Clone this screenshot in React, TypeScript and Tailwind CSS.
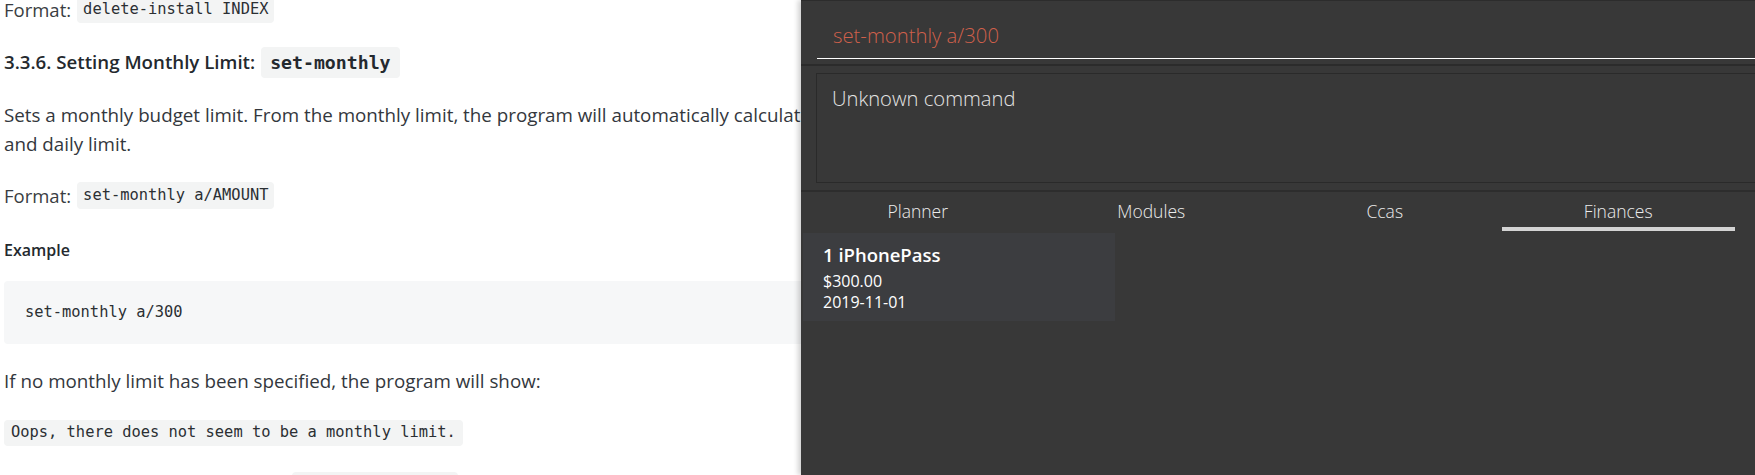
import React from "react";

const body = "font-['Open_Sans','Noto_Sans',sans-serif]";
const mono = "font-['DejaVu_Sans_Mono','Liberation_Mono',monospace]";
const seg = "font-['Open_Sans','Noto_Sans',sans-serif]";

function Code({ children, cls = "" }: { children: React.ReactNode; cls?: string }) {
  return (
    <span
      className={`${mono} inline-flex items-center bg-[#f3f4f4] rounded-[4px] px-[6px] text-[15.4px] text-[#2b2f33] ${cls}`}
    >
      {children}
    </span>
  );
}

export default function App() {
  return (
    <div className="flex w-[1755px] h-[475px] overflow-hidden bg-white">
      {/* Left: documentation page */}
      <div className={`w-[801px] shrink-0 overflow-hidden ${body} text-[#2c3036]`}>
        <div className="w-[1200px] pl-[4px] flex flex-col items-start">
          {/* Format: delete-install INDEX */}
          <div className="mt-[-4px] h-[27px] flex items-center gap-[6px] text-[18.5px]">
            <span className="text-[#3a3d42]">Format:</span>
            <Code cls="h-[27px]">delete-install INDEX</Code>
          </div>

          {/* Heading */}
          <div className="mt-[24px] h-[31px] flex items-center gap-[6px]">
            <span className="text-[18.7px] font-semibold text-[#24292e]">3.3.6. Setting Monthly Limit:</span>
            <span
              className={`${mono} inline-flex items-center h-[31px] bg-[#f3f4f4] rounded-[4px] px-[9px] text-[18.2px] font-bold text-[#24292e]`}
            >
              set-monthly
            </span>
          </div>

          {/* Paragraph */}
          <div className="mt-[23px] text-[18.8px] leading-[29px] whitespace-nowrap text-[#33373d]">
            Sets a monthly budget limit. From the monthly limit, the program will automatically calculate the weekly limit
            <br />
            and daily limit.
          </div>

          {/* Format: set-monthly a/AMOUNT */}
          <div className="mt-[23px] h-[27px] flex items-center gap-[6px] text-[18.5px]">
            <span className="text-[#3a3d42]">Format:</span>
            <Code cls="h-[27px]">set-monthly a/AMOUNT</Code>
          </div>

          {/* Example */}
          <div className="mt-[29px] text-[16px] leading-[24px] font-semibold text-[#24292e]">Example</div>

          {/* Code block */}
          <div className="mt-[19px] w-[1000px] h-[63px] bg-[#f6f7f8] rounded-[4px] flex items-center pl-[21px]">
            <span className={`${mono} text-[15.4px] text-[#2b2f33]`}>set-monthly a/300</span>
          </div>

          {/* If no monthly limit */}
          <div className="mt-[23px] text-[18.8px] leading-[28px] whitespace-nowrap text-[#33373d]">
            If no monthly limit has been specified, the program will show:
          </div>

          {/* Oops */}
          <div className="mt-[24px]">
            <Code cls="h-[26px] px-[7px]">Oops, there does not seem to be a monthly limit.</Code>
          </div>

          {/* Partial next line */}
          <div className="mt-[26px] h-[27px] pl-[288px]">
            <span className="block w-[166px] h-[27px] bg-[#f3f4f4] rounded-[4px]" />
          </div>
        </div>
      </div>

      {/* Right: app window */}
      <div className={`relative z-10 flex-1 bg-[#383838] flex flex-col shadow-[-3px_0_5px_rgba(0,0,0,0.18)] ${seg}`}>
        {/* command box */}
        <div className="border-t border-[#2c2c2c] h-[64px] pl-[16px] pt-[12px]">
          <div className="h-[46px] border-b border-white flex items-center pl-[16px]">
            <span className="text-[20.3px] font-light text-[#d0604b]">set-monthly a/300</span>
          </div>
        </div>
        <div className="h-[2px] bg-[#2b2b2b]" />

        {/* result box */}
        <div className="h-[124px] pt-[7px] pl-[15px]">
          <div className="h-[110px] border border-r-0 border-[#2a2a2a] pl-[15px] pt-[9px]">
            <span className="text-[20.2px] font-light text-[#e4e4e4]">Unknown command</span>
          </div>
        </div>
        <div className="h-[2px] bg-[#2d2d2d]" />

        {/* tabs */}
        <div className="grid grid-cols-4 w-[934px] h-[41px]">
          {["Planner", "Modules", "Ccas", "Finances"].map((t, i) => (
            <div key={t} className="flex flex-col items-center">
              <span className="mt-[7px] text-[17.5px] font-light leading-[24px] text-[#ececec]">{t}</span>
              {i === 3 ? (
                <div className="mt-[4px] w-full h-[4px] bg-[#d3d3d3]" />
              ) : null}
            </div>
          ))}
        </div>

        {/* list */}
        <div className="pl-[2px]">
          <div className="w-[312px] h-[88px] bg-[#3c3d40] pl-[20px] pt-[10px] text-white">
            <div className="text-[18.5px] font-semibold leading-[24px]">1 iPhonePass</div>
            <div className="text-[16px] leading-[22px] mt-[3px]">$300.00</div>
            <div className="text-[16px] leading-[21px]">2019-11-01</div>
          </div>
        </div>
      </div>
    </div>
  );
}
